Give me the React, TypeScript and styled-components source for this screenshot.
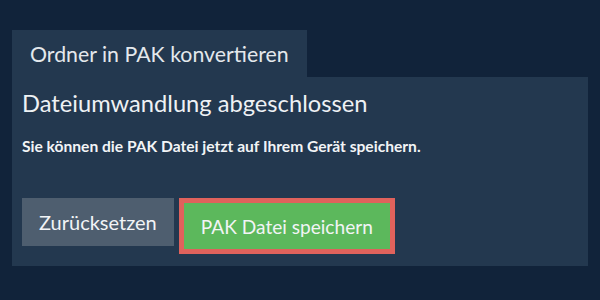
import React from "react";
import { createGlobalStyle, styled } from "styled-components";

const GlobalStyle = createGlobalStyle`
  html, body {
    margin: 0;
    padding: 0;
    background: #11233a;
  }
  body {
    font-family: Lato, "Open Sans", sans-serif;
    color: #f2f4f6;
  }
`;

const Page = styled.div`
  width: 600px;
  height: 300px;
  box-sizing: border-box;
  padding: 30px 12px 0;
  display: flex;
  flex-direction: column;
  align-items: flex-start;
`;

const Tab = styled.div`
  height: 47px;
  box-sizing: border-box;
  padding: 0 18px;
  display: flex;
  align-items: center;
  background: #23384f;
  font-size: 21.3px;
  color: #e4e8ec;
`;

const Panel = styled.div`
  align-self: stretch;
  height: 189px;
  box-sizing: border-box;
  padding: 12px 10px 0;
  background: #23384f;
  display: flex;
  flex-direction: column;
`;

const Heading = styled.h2`
  margin: 0;
  font-size: 23.7px;
  font-weight: 400;
  line-height: 29px;
  color: #eef1f4;
`;

const Message = styled.p`
  margin: 18px 0 0;
  font-size: 15.6px;
  font-weight: 700;
  line-height: 20px;
`;

const Actions = styled.div`
  margin-top: 42px;
  display: flex;
  align-items: flex-start;
  gap: 5px;
`;

const Button = styled.button<{ $variant: "reset" | "save" }>`
  font-family: inherit;
  font-size: ${({ $variant }) => ($variant === "save" ? "19.1px" : "20px")};
  color: #f2f4f6;
  cursor: pointer;
  height: ${({ $variant }) => ($variant === "save" ? "56px" : "48px")};
  padding: 0 17px;
  background: ${({ $variant }) => ($variant === "save" ? "#5cb85c" : "#4e5e6f")};
  border: ${({ $variant }) => ($variant === "save" ? "5px solid #e0625c" : "none")};
`;

export default function App() {
  return (
    <>
      <GlobalStyle />
      <Page>
        <Tab>Ordner in PAK konvertieren</Tab>
        <Panel>
          <Heading>Dateiumwandlung abgeschlossen</Heading>
          <Message>Sie können die PAK Datei jetzt auf Ihrem Gerät speichern.</Message>
          <Actions>
            <Button $variant="reset">Zurücksetzen</Button>
            <Button $variant="save">PAK Datei speichern</Button>
          </Actions>
        </Panel>
      </Page>
    </>
  );
}
